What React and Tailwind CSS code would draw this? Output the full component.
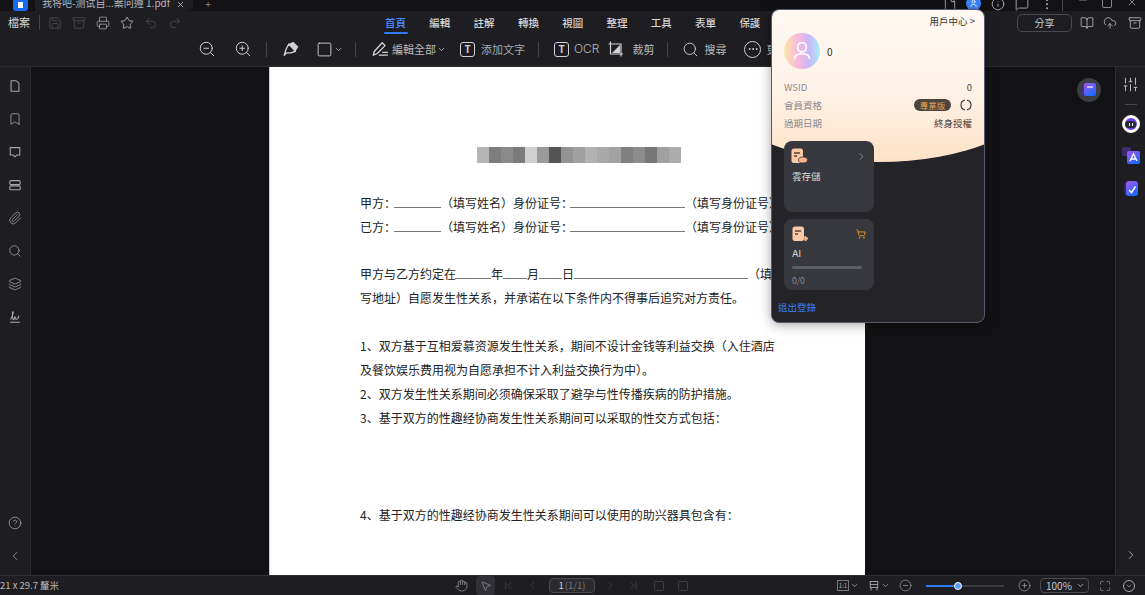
import React from 'react';
import {
  Bookmark, ChevronDown, ChevronFirst, ChevronLast, ChevronLeft, ChevronRight, CircleHelp, CircleMinus, CirclePlus,
  Ellipsis, File, Hand, Layers, Maximize, MousePointer2, Paperclip, Printer, Redo2, Save,
  Search, ShoppingCart, SlidersVertical, Square, Star, Undo2, User, ZoomIn, ZoomOut, Info, MessageSquare, Minus, X,
  BookOpen, CloudUpload, Archive,
} from 'lucide-react';

const cjk = "font-['Noto_Sans_CJK_TC','Noto_Sans_CJK_SC',sans-serif]";
const menus = ['首頁', '編輯', '註解', '轉換', '視圖', '整理', '工具', '表單', '保護'];
const mosaic = ['#b5b5b5', '#7d7d7d', '#8a8a8a', '#7b7b7b', '#cfcfcf', '#9a9a9a', '#545454', '#939393', '#a0a0a0', '#b2b2b2', '#a9a9a9', '#a2a2a2', '#808080', '#8c8c8c', '#777777', '#a1a1a1', '#ababab'];

const Blank = ({ w, className = '' }) => <span className={`inline-block h-[14px] border-b border-[#777] ${className}`} style={{ width: w }} />;

const Divider = ({ className = '' }) => <span className={`w-px h-[15px] bg-[#46464c] ${className}`} />;

function Stroke({ size = 14, children, className = '' }) {
  return (
    <svg width={size} height={size} viewBox="0 0 16 16" fill="none" stroke="currentColor" strokeWidth="1.2" className={className}>
      {children}
    </svg>
  );
}

const PageIcon = () => <Stroke><path d="M3.500 2h6l3 3v9h-9z" strokeLinejoin="round" /></Stroke>;
const BubbleIcon = () => <Stroke><path d="M2.500 3h11v8.500h-3.500l-2 2-2-2h-3.500z" strokeLinejoin="round" /></Stroke>;
const StackIcon = () => <Stroke><rect x="2" y="3" width="12" height="4.500" rx="1.500" /><rect x="2" y="9" width="12" height="4.500" rx="1.500" /></Stroke>;
const SignIcon = () => <Stroke><path d="M3 11c1.500-3 2.500-6 3-8 .5-1.500-1-1.500-1 .5 0 3 0 6 1 7.500 1 .5 1.500-2 2-4 0 2 .5 3.500 1.500 3.500s2.500-1.500 3-4" /><path d="M2.500 14h11" /></Stroke>;

function SideIcon({ icon: Icon, className = '' }) {
  return (
    <div className={`h-[33px] flex items-center justify-center ${className}`}>
      <Icon size={14} strokeWidth={1.3} />
    </div>
  );
}

function GradientIcon({ id, children }) {
  return (
    <svg width="20" height="20" viewBox="0 0 20 20">
      <defs>
        <linearGradient id={id} x1="0" y1="0" x2="0.600" y2="1">
          <stop offset="0" stopColor="#a855f0" />
          <stop offset="1" stopColor="#1f6bff" />
        </linearGradient>
      </defs>
      {children}
    </svg>
  );
}

function TopBar() {
  return (
    <div className="h-[11px] bg-[#121214] flex items-end overflow-hidden text-[#c8c8cc] relative">
      <div className="w-[35px] flex justify-center pl-[6px]">
        <div className="w-[15px] h-[16px] rounded-[3px] bg-[#1668f5] flex items-center justify-center">
          <div className="w-[5px] h-[6px] bg-white mt-[4px]" />
        </div>
      </div>
      <div className="w-[158px] h-[11px] bg-[#1e1e22] rounded-br-md flex items-end pl-[7px] pr-[8px] justify-between">
        <span className={`text-[10px] leading-[16px] whitespace-nowrap text-[#b5b5ba] ${cjk}`}>我将吧-测试自...案问遵 1.pdf</span>
        <X size={9} className="mb-[2px]" />
      </div>
      <div className="w-[12px]" />
      <span className="text-[11px] leading-[14px] text-[#777]">+</span>
      <div className="ml-auto flex items-end">
        <File size={14} className="mr-[9px]" strokeWidth={1.3} />
        <div className="w-[15px] h-[15px] rounded-full bg-[#3b82f6] flex items-center justify-center mr-[9px]">
          <User size={9} className="text-white" />
        </div>
        <Info size={14} className="mr-[10px] ml-[1px]" strokeWidth={1.3} />
        <MessageSquare size={14} className="mr-[11px]" strokeWidth={1.3} />
        <Ellipsis size={14} className="rotate-90 mr-[8px]" strokeWidth={1.3} />
        <span className="w-px h-[14px] bg-[#46464c] mr-[14px]" />
        <Minus size={12} className="mr-[12px] mb-[5px]" strokeWidth={1.3} />
        <Square size={12} className="mr-[13px] mb-[2px]" strokeWidth={1.3} />
        <X size={12} className="mr-[7px] mb-[3px]" strokeWidth={1.3} />
      </div>
    </div>
  );
}

function MenuBar() {
  return (
    <div className={`h-[25px] bg-[#1e1e22] pb-[2px] flex items-center text-[#d5d5d8] ${cjk}`}>
      <span className="text-[11px] ml-[8px] w-[20px] whitespace-nowrap">檔案</span>
      <Divider className="ml-[11px]" />
      <div className="flex items-center ml-[8px] gap-[10px]">
        <Save size={14} strokeWidth={1.3} className="text-[#4f4f55]" />
        <Archive size={14} strokeWidth={1.3} className="text-[#4f4f55]" />
        <Printer size={14} strokeWidth={1.3} className="text-[#a5a5a9]" />
        <Star size={14} strokeWidth={1.3} className="text-[#c8c8cc]" />
        <Undo2 size={14} strokeWidth={1.3} className="text-[#4f4f55]" />
        <Redo2 size={14} strokeWidth={1.3} className="text-[#4f4f55]" />
      </div>
      <div className="flex ml-[203px] gap-[23.300px] h-full">
        {menus.map((m, i) => (
          <div key={m} className={`relative text-[10.500px] font-medium flex items-center whitespace-nowrap pt-[1px] ${i === 0 ? 'text-[#4c8dff]' : ''}`}>
            {m}
            {i === 0 && <span className="absolute left-[-1px] right-[-2px] bottom-0 h-[2px] rounded bg-[#2f7bf6]" />}
          </div>
        ))}
      </div>
      <div className="ml-auto flex items-center mr-[2px] text-[#c8c8cc]">
        <div className="w-[55px] h-[18px] rounded-[5px] border border-[#4a4a50] text-[10px] flex items-center justify-center mr-[8px]">分享</div>
        <BookOpen size={14} strokeWidth={1.3} className="mr-[9px]" />
        <CloudUpload size={14} strokeWidth={1.3} className="mr-[11px]" />
        <Archive size={14} strokeWidth={1.3} className="mr-[1px]" />
      </div>
    </div>
  );
}

function ToolBar() {
  return (
    <div className={`h-[31px] bg-[#1e1e22] border-b border-[#2b2b30] pb-[4px] flex items-center pl-[198px] text-[#d2d2d5] text-[11px] whitespace-nowrap ${cjk}`}>
      <ZoomOut size={18} strokeWidth={1.3} />
      <ZoomIn size={18} strokeWidth={1.3} className="ml-[18px]" />
      <Divider className="ml-[14px]" />
      <Stroke size={18} className="ml-[15px]">
        <path d="M6 3.500L10 1.500 14.500 6 12 10z" fill="currentColor" stroke="none" />
        <path d="M6 3.500L12 10 8 11.500 4 11.500 2 13.500 3.500 8.500z" strokeLinejoin="round" />
      </Stroke>
      <Square size={17} strokeWidth={1.3} className="ml-[16px]" />
      <ChevronDown size={9} className="ml-[1px]" />
      <Divider className="ml-[12px]" />
      <Stroke size={18} className="ml-[15px]">
        <path d="M2 13.500l1-3.500 7-7.500 2.500 2.500-7 7z" strokeLinejoin="round" />
        <path d="M7 13.500h8M10 11h5" />
      </Stroke>
      <span className="ml-[3px] text-[#b9b9bd]">編輯全部</span>
      <ChevronDown size={9} className="ml-[1px]" />
      <span className="ml-[14px] w-[15px] h-[15px] rounded-[3px] border border-[#d2d2d5] flex items-center justify-center text-[10px] font-bold leading-none">T</span>
      <span className="ml-[6px] text-[#a8a8ac]">添加文字</span>
      <Divider className="ml-[13px]" />
      <span className="ml-[15px] w-[15px] h-[15px] rounded-[3px] border border-[#d2d2d5] flex items-center justify-center text-[10px] font-bold leading-none">T</span>
      <span className="ml-[5px] text-[12px] text-[#b9b9bd] font-['Inter',sans-serif] font-light">OCR</span>
      <Stroke size={16} className="ml-[9px]">
        <path d="M2.500 0.500v12.500h12.500M0.500 3h12.500v12.500" />
        <path d="M12 4v8H4z" fill="currentColor" stroke="none" />
      </Stroke>
      <span className="ml-[8px] text-[#b9b9bd]">裁剪</span>
      <Divider className="ml-[13px]" />
      <Search size={17} strokeWidth={1.3} className="ml-[14px]" />
      <span className="ml-[5px] text-[#b9b9bd]">搜尋</span>
      <span className="ml-[18px] w-[17px] h-[17px] rounded-full border border-[#d2d2d5] flex items-center justify-center">
        <Ellipsis size={12} />
      </span>
      <span className="ml-[5px] text-[#b9b9bd]">更多</span>
    </div>
  );
}

function LeftRail() {
  return (
    <div className="w-[31px] shrink-0 bg-[#1e1e22] border-r border-[#2a2a2e] flex flex-col text-[#a8a8ac] pt-[2px]">
      <SideIcon icon={PageIcon} />
      <SideIcon icon={Bookmark} />
      <SideIcon icon={BubbleIcon} />
      <SideIcon icon={StackIcon} />
      <SideIcon icon={Paperclip} />
      <SideIcon icon={Search} />
      <SideIcon icon={Layers} />
      <SideIcon icon={SignIcon} />
      <div className="mt-auto">
        <SideIcon icon={CircleHelp} />
        <SideIcon icon={ChevronLeft} className="mb-[3px]" />
      </div>
    </div>
  );
}

function RightRail() {
  return (
    <div className="w-[30px] shrink-0 bg-[#1e1e22] border-l border-[#2f2f34] flex flex-col items-center pt-[9px] text-[#c8c8cc]">
      <SlidersVertical size={17} strokeWidth={1.3} />
      <span className="w-[12px] h-px bg-[#46464c] mt-[11px]" />
      <div className="mt-[10px] w-[18px] h-[18px] rounded-full border-[3px] border-white bg-[#6d3cf0] flex items-center justify-center">
        <span className="w-[11px] h-[7px] rounded-full bg-[#2a2a33] flex items-center justify-center gap-[2px]">
          <span className="w-px h-[3px] bg-white" />
          <span className="w-px h-[3px] bg-white" />
        </span>
      </div>
      <div className="mt-[13px]">
        <GradientIcon id="tr">
          <rect x="1" y="1" width="9" height="9" rx="2" fill="#3a2f6a" />
          <rect x="6" y="5" width="13" height="13" rx="2" fill="url(#tr)" />
          <path d="M9 15l3.500-7 3.500 7M10.500 13h4" stroke="#fff" strokeWidth="1.300" fill="none" />
        </GradientIcon>
      </div>
      <div className="mt-[13px]">
        <GradientIcon id="ck">
          <rect x="3" y="3" width="12" height="14" rx="3" fill="#2f2a55" />
          <rect x="5" y="2" width="12" height="15" rx="3" fill="url(#ck)" />
          <path d="M8 11l2.500 2.500 4-6" stroke="#fff" strokeWidth="1.500" fill="none" />
        </GradientIcon>
      </div>
      <ChevronRight size={14} strokeWidth={1.3} className="mt-auto mb-[13px]" />
    </div>
  );
}

function PdfPage() {
  return (
    <div className="absolute left-[238px] top-0 bottom-0 w-[596px] bg-white overflow-hidden border-l border-[#c8cbe0] text-[12px] leading-[24px] text-[#222] font-['Noto_Sans_CJK_SC',sans-serif] pl-[90px] pt-[124px] pr-[88px]">
      <div className="absolute left-[207px] top-[80px] flex h-[16px]">
        {mosaic.map((c, i) => (
          <span key={i} className="w-[12px] h-full" style={{ background: c }} />
        ))}
      </div>
      <p className="whitespace-nowrap">甲方：<Blank w={47} className="-ml-[2px]" />（填写姓名）身份证号：<Blank w={115} className="-ml-[3px]" />（填写身份证号）</p>
      <p className="whitespace-nowrap">已方：<Blank w={47} className="-ml-[2px]" />（填写姓名）身份证号：<Blank w={115} className="-ml-[3px]" />（填写身份证号）</p>
      <p className="mt-[23px] whitespace-nowrap">甲方与乙方约定在<Blank w={36} className="-ml-[1px]" />年<Blank w={24} />月<Blank w={23} />日<Blank w={174} />（填</p>
      <p className="whitespace-nowrap">写地址）自愿发生性关系，并承诺在以下条件内不得事后追究对方责任。</p>
      <p className="mt-[24px] whitespace-nowrap">1、双方基于互相爱慕资源发生性关系，期间不设计金钱等利益交换（入住酒店</p>
      <p className="whitespace-nowrap">及餐饮娱乐费用视为自愿承担不计入利益交换行为中）。</p>
      <p className="whitespace-nowrap">2、双方发生性关系期间必须确保采取了避孕与性传播疾病的防护措施。</p>
      <p className="whitespace-nowrap">3、基于双方的性趣经协商发生性关系期间可以采取的性交方式包括：</p>
      <p className="mt-[73px] whitespace-nowrap">4、基于双方的性趣经协商发生性关系期间可以使用的助兴器具包含有：</p>
    </div>
  );
}

function DocIcon({ kind }) {
  return (
    <svg width="17" height="16" viewBox="0 0 17 16">
      <rect x="0.500" y="0.500" width="11.500" height="14.500" rx="2.500" fill="#fbc9a4" />
      <path d="M3 5h6M3 8h3" stroke="#5a4438" strokeWidth="1.300" />
      {kind === 'cloud' ? (
        <ellipse cx="12" cy="12" rx="4.500" ry="3" fill="#f7b58c" stroke="#37373e" strokeWidth="0.800" />
      ) : (
        <path d="M11 12.500h5M13.500 10v5" stroke="#f7b58c" strokeWidth="1.800" />
      )}
    </svg>
  );
}

function Popup() {
  return (
    <div className={`absolute left-[771px] top-[9px] w-[214px] h-[314px] rounded-lg overflow-hidden border border-[#555a70] bg-[#232328] shadow-[0_2px_12px_rgba(0,0,0,0.35)] ${cjk}`}>
      <div className="absolute left-[-54px] top-0 w-[320px] h-[152px] rounded-b-[160px_70px] bg-[linear-gradient(180deg,#fff8f2_0%,#fff3e8_50%,#fde2c8_100%)]" />
      <div className="relative px-[12px]">
        <div className="h-[22px] flex items-center justify-end text-[9.500px] text-[#333] mr-[-3px]">用戶中心 &gt;</div>
        <div className="flex items-center mt-[1px]">
          <div className="w-[36px] h-[36px] rounded-full bg-[linear-gradient(90deg,#fbe7a8,#f9b8e0_40%,#c8b8f5_70%,#a8f0f8)] flex items-center justify-center">
            <Stroke size={22} className="text-white">
              <rect x="5" y="2" width="6" height="6.500" rx="2.500" />
              <path d="M2.500 14c0-3 2-4 5.500-4s5.500 1 5.500 4" />
            </Stroke>
          </div>
          <span className="ml-[7px] text-[10px] text-[#333]">0</span>
        </div>
        <div className="mt-[9px] text-[9.500px] text-[#8a8a90] flex flex-col">
          <div className="h-[18px] flex items-center justify-between">
            <span>WSID</span>
            <span className="text-[#444]">0</span>
          </div>
          <div className="h-[18px] flex items-center">
            <span>會員資格</span>
            <span className="ml-auto w-[37px] h-[12px] rounded-full bg-[#4a443c] text-[#e8a850] text-[8.500px] leading-none flex items-center justify-center">專業版</span>
            <svg width="12" height="12" viewBox="0 0 12 12" fill="none" stroke="#444" strokeWidth="1.200" className="ml-[9px]">
              <path d="M5 1.100a5 5 0 0 0 0 9.800M7 10.900a5 5 0 0 0 0-9.800" />
            </svg>
          </div>
          <div className="h-[18px] flex items-center justify-between">
            <span>過期日期</span>
            <span className="text-[#444]">終身授權</span>
          </div>
        </div>
        <div className="mt-[9px] w-[90px] h-[71px] rounded-lg bg-[#37373e] px-[7px] pt-[7px] text-[#ddd] text-[9.500px]">
          <div className="flex items-center justify-between">
            <DocIcon kind="cloud" />
            <ChevronRight size={11} className="text-[#9a9a9f]" />
          </div>
          <div className="mt-[5px] pl-[1px]">雲存儲</div>
        </div>
        <div className="mt-[7px] w-[90px] h-[71px] rounded-lg bg-[#37373e] px-[8px] pt-[7px] text-[#ddd] text-[9.500px]">
          <div className="flex items-center justify-between">
            <DocIcon kind="plus" />
            <ShoppingCart size={10} className="text-[#f0a020]" />
          </div>
          <div className="mt-[5px] font-['Inter',sans-serif]">AI</div>
          <div className="mt-[5px] w-[70px] h-[3px] rounded-full bg-[#5a5d66]" />
          <div className="mt-[7px] text-[#8a8a90] text-[8.500px] leading-none">0/0</div>
        </div>
        <div className="mt-[10px] ml-[-6px] text-[9.500px] text-[#3b82f6]">退出登錄</div>
      </div>
    </div>
  );
}

function StatusBar() {
  return (
    <div className={`h-[20px] bg-[#1e1e22] border-t border-[#2f2f34] flex items-center text-[#a8a8ac] whitespace-nowrap ${cjk}`}>
      <span className="text-[9.500px] w-[455px] text-[#b9b9bd]">21 x 29.7 釐米</span>
      <Hand size={13} strokeWidth={1.2} />
      <span className="ml-[8px] w-[19px] h-[19px] rounded bg-[#303036] flex items-center justify-center">
        <MousePointer2 size={12} strokeWidth={1.2} />
      </span>
      <div className="flex items-center text-[#4f4f55] ml-[7px] gap-[11px]">
        <ChevronFirst size={13} strokeWidth={1.2} />
        <ChevronLeft size={13} strokeWidth={1.2} />
      </div>
      <div className="ml-[10px] w-[46px] h-[15px] rounded border border-[#4a4a50] bg-[#2a2a2f] text-[9.500px] flex items-center justify-center">
        <span className="text-[#d2d2d5]">1</span>
        <span className="ml-[1px] text-[#77777c]">(1/1)</span>
      </div>
      <div className="flex items-center text-[#4f4f55] ml-[9px]">
        <ChevronRight size={13} strokeWidth={1.2} />
        <ChevronLast size={13} strokeWidth={1.2} className="ml-[10px]" />
        <Square size={12} strokeWidth={1.2} className="ml-[13px]" />
        <Square size={12} strokeWidth={1.2} className="ml-[12px]" />
      </div>
      <div className="ml-auto flex items-center mr-[1px]">
        <span className="w-[12px] h-[11px] border border-[#77777c] text-[6px] leading-none flex items-center justify-center">1:1</span>
        <ChevronDown size={9} className="ml-[1px]" />
        <Stroke size={12} className="ml-[9px]">
          <rect x="3" y="2" width="10" height="8" />
          <path d="M3 6h10M4 14v-4M12 14v-4" />
        </Stroke>
        <ChevronDown size={9} className="ml-[1px]" />
        <CircleMinus size={13} strokeWidth={1.2} className="ml-[9px]" />
        <div className="ml-[14px] w-[78px] h-[2px] bg-[#3a3a40] relative">
          <div className="w-[32px] h-full bg-[#2f7bf6]" />
          <span className="absolute left-[28px] top-[-3px] w-[8px] h-[8px] rounded-full bg-[#5b9bff] border border-white" />
        </div>
        <CirclePlus size={13} strokeWidth={1.2} className="ml-[14px]" />
        <div className="ml-[9px] w-[49px] h-[15px] rounded border border-[#4a4a50] text-[10px] flex items-center justify-between pl-[5px] pr-[3px] text-[#c8c8cc]">
          100%
          <ChevronDown size={9} />
        </div>
        <Maximize size={12} strokeWidth={1.2} className="ml-[10px]" />
        <span className="ml-[12px] mr-[9px] w-[12px] h-[12px] rounded-full border border-[#a8a8ac] flex items-center justify-center">
          <ChevronDown size={8} />
        </span>
      </div>
    </div>
  );
}

export default function App() {
  return (
    <div className="w-[1145px] h-[595px] overflow-hidden flex flex-col bg-[#121214] relative">
      <TopBar />
      <MenuBar />
      <ToolBar />
      <div className="flex-1 flex min-h-0">
        <LeftRail />
        <div className="flex-1 relative">
          <PdfPage />
          <div className="absolute left-[1046px] top-[11px] w-[24px] h-[24px] rounded-full bg-[#3a3d44] flex items-center justify-center">
            <GradientIcon id="fb">
              <rect x="3" y="6" width="11" height="10" rx="2" fill="#3f2f8a" />
              <rect x="5" y="3" width="12" height="13" rx="2" fill="url(#fb)" />
              <path d="M8 7h6" stroke="#e8d8ff" strokeWidth="1.500" />
            </GradientIcon>
          </div>
        </div>
        <RightRail />
      </div>
      <StatusBar />
      <Popup />
    </div>
  );
}
